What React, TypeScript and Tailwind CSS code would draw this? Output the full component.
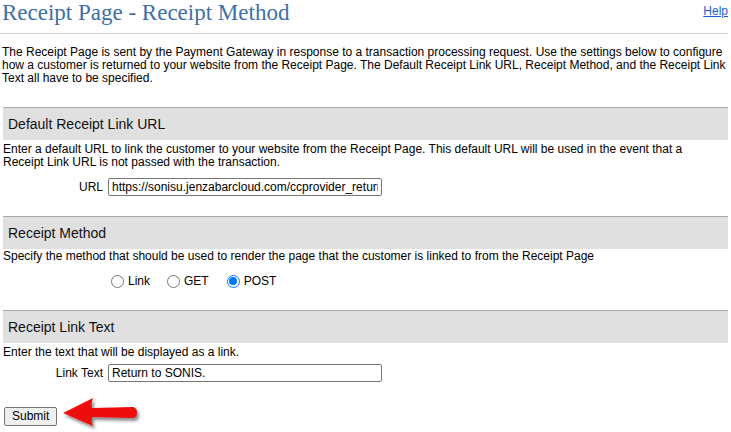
const sections = {
  url: "Default Receipt Link URL",
  method: "Receipt Method",
  text: "Receipt Link Text",
};

function SectionHead({ title }: { title: string }) {
  return (
    <div className="h-[33px] border-t border-[#a9a9a9] bg-[#e0e0e0] flex items-center pl-[5px] text-[14px] text-[#111]">
      {title}
    </div>
  );
}

function Field({ label, value }: { label: string; value: string }) {
  return (
    <div className="flex items-center gap-[5px]">
      <span className="w-[100px] text-right text-[12px] leading-[14px]">{label}</span>
      <input
        readOnly
        value={value}
        className="w-[274px] h-[18px] border border-[#767676] rounded-[2px] px-[3px] text-[12px] text-black bg-white outline-none"
      />
    </div>
  );
}

function Radio({ label, checked }: { label: string; checked?: boolean }) {
  return (
    <label className="flex items-center">
      {checked ? (
        <span className="w-[13px] h-[13px] rounded-full border border-[#0075ff] bg-white flex items-center justify-center">
          <span className="w-[8px] h-[8px] rounded-full bg-[#0075ff]" />
        </span>
      ) : (
        <span className="w-[13px] h-[13px] rounded-full border border-[#767676] bg-white" />
      )}
      <span className="ml-[4px] text-[12px] leading-[14px]">{label}</span>
    </label>
  );
}

export default function App() {
  return (
    <div className="w-[731px] h-[432px] overflow-hidden bg-white text-black font-['Liberation_Sans',Arial,sans-serif]">
      {/* Header */}
      <div className="h-[34px] border-b border-[#cccccc] mr-[3px] flex justify-between items-start pl-[2px]">
        <h1 className="font-['Liberation_Serif','Times_New_Roman',serif] text-[23px] leading-[26px] text-[#3d6fa8]">
          Receipt Page - Receipt Method
        </h1>
        <a href="#" className="mt-[4px] text-[12px] leading-[14px] text-[#1a5fd0] underline">
          Help
        </a>
      </div>

      <div className="px-[3px]">
        <p className="mt-[12px] text-[12px] leading-[13px] -ml-[1px]">
          The Receipt Page is sent by the Payment Gateway in response to a transaction processing request. Use the settings below to configure how a customer is returned to your website from the Receipt Page. The Default Receipt Link URL, Receipt Method, and the Receipt Link Text all have to be specified.
        </p>

        {/* Default URL */}
        <div className="mt-[22px]">
          <SectionHead title={sections.url} />
          <p className="mt-[3px] text-[12px] leading-[13px]">
            Enter a default URL to link the customer to your website from the Receipt Page. This default URL will be used in the event that a
            <br />
            Receipt Link URL is not passed with the transaction.
          </p>
          <div className="mt-[9px]">
            <Field label="URL" value="https://sonisu.jenzabarcloud.com/ccprovider_return.cfm" />
          </div>
        </div>

        {/* Method */}
        <div className="mt-[20px]">
          <SectionHead title={sections.method} />
          <p className="mt-[1px] text-[12px] leading-[13px]">
            Specify the method that should be used to render the page that the customer is linked to from the Receipt Page
          </p>
          <div className="mt-[11px] flex items-center h-[14px] pl-[108px]">
            <Radio label="Link" />
            <span className="w-[17px]" />
            <Radio label="GET" />
            <span className="w-[18px]" />
            <Radio label="POST" checked />
          </div>
        </div>

        {/* Link text */}
        <div className="mt-[22px]">
          <SectionHead title={sections.text} />
          <p className="mt-[3px] text-[12px] leading-[13px]">Enter the text that will be displayed as a link.</p>
          <div className="mt-[5px]">
            <Field label="Link Text" value="Return to SONIS." />
          </div>
        </div>

        <div className="relative mt-[21px]">
          <button className="ml-[1px] h-[19px] px-[7px] text-[12px] leading-[14px] bg-[#efefef] border border-[#767676] rounded-[2px] text-black">
            Submit
          </button>
          <svg
            className="absolute left-[57px] top-[-8px]"
            width="82"
            height="36"
            viewBox="0 0 82 36"
          >
            <defs>
              <filter id="sh" x="-20%" y="-30%" width="150%" height="180%">
                <feDropShadow dx="2" dy="3" stdDeviation="1.8" floodColor="#000" floodOpacity="0.45" />
              </filter>
            </defs>
            <path
              d="M3 18 L33 3 Q31 9 32 13 L72 12 Q77 12 77 17.5 Q77 23 72 23 L32 22 Q31 27 33 31 Z"
              fill="#ee1111"
              filter="url(#sh)"
            />
          </svg>
        </div>
      </div>
    </div>
  );
}
